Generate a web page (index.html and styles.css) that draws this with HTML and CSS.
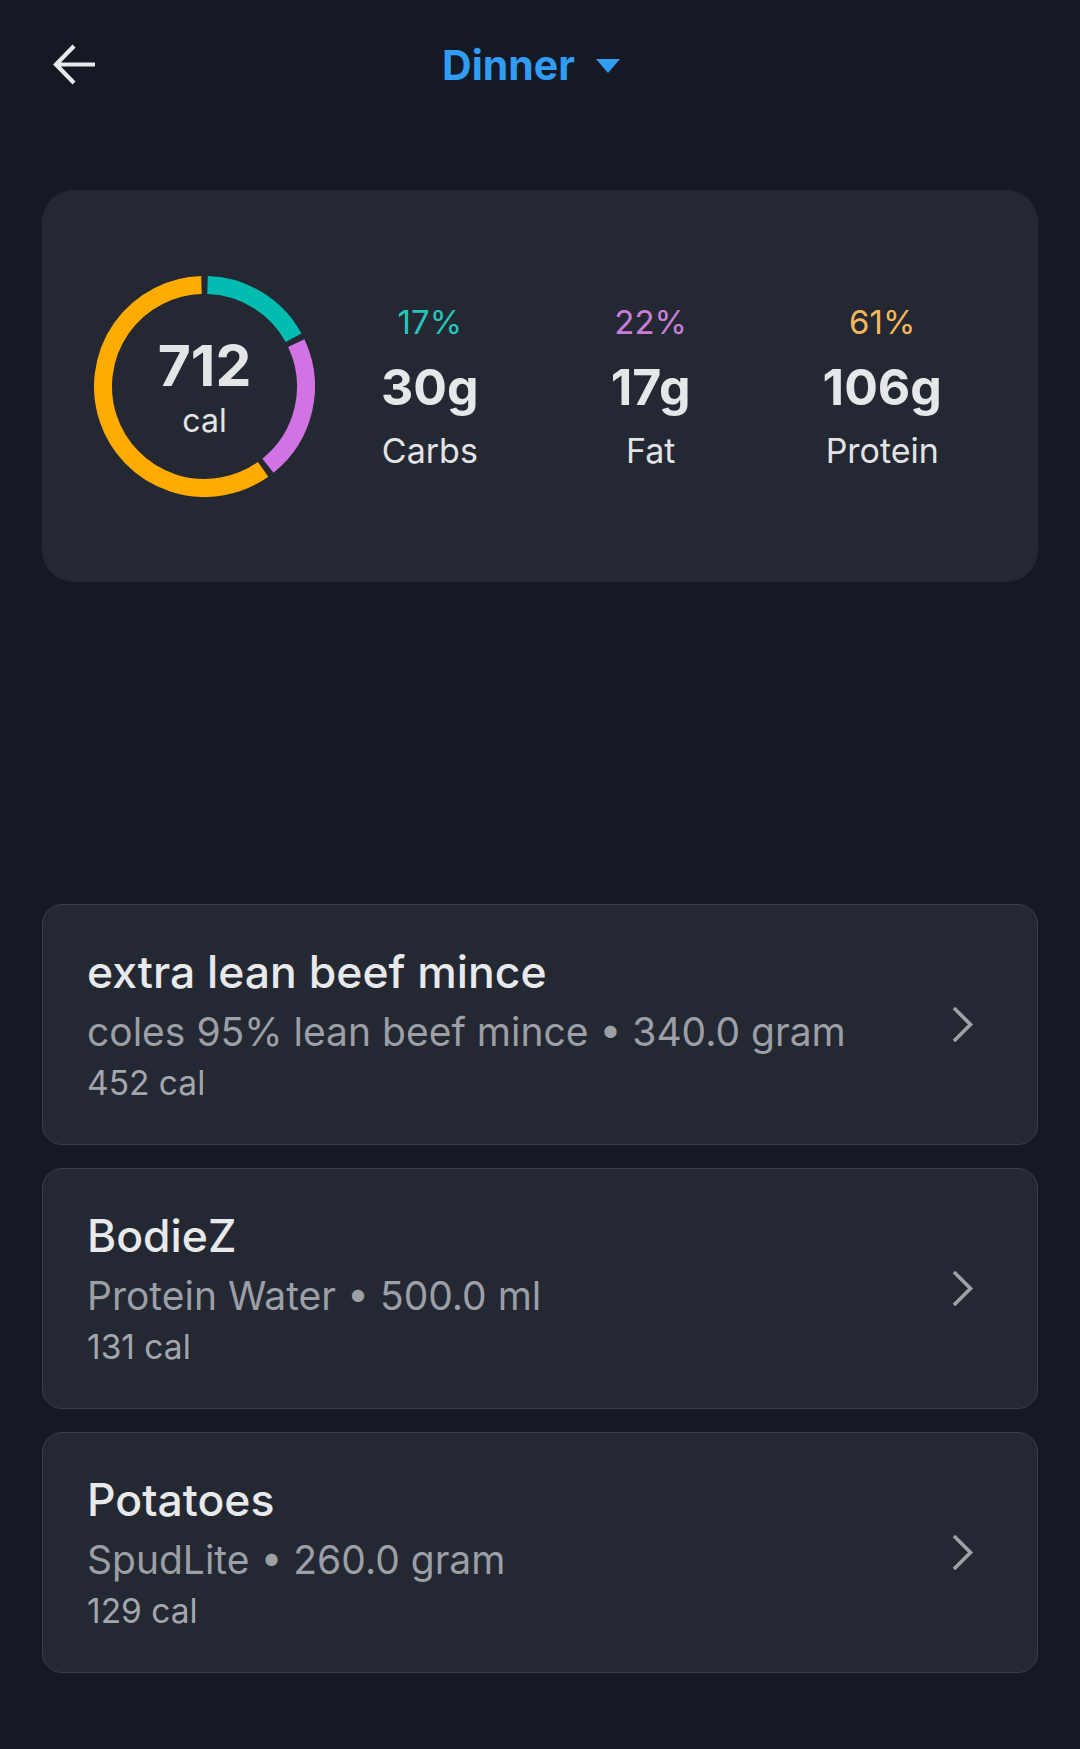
FILE: index.html
```html
<!DOCTYPE html>
<html lang="en">
<head>
    <meta charset="UTF-8">
    <meta name="viewport" content="width=device-width, initial-scale=1.0">
    <title>Dinner</title>
    <link rel="stylesheet" href="styles.css">
</head>
<body>
    <header class="topbar">
        <div class="back">
            <svg width="60" height="60" viewBox="0 0 60 60">
                <path d="M55 29.5H16.5M34 11L16 29.5L34 48" fill="none" stroke="#e8e9eb" stroke-width="4.2"/>
            </svg>
        </div>
        <div class="meal-select">
            <span class="meal-name">Dinner</span>
            <svg width="60" height="60" viewBox="0 0 60 60">
                <path d="M18 24H42L30 38Z" fill="#319cf4"/>
            </svg>
        </div>
        <div></div>
    </header>

    <main class="content">
        <section class="summary">
            <div class="ring">
                <svg width="221" height="221" viewBox="0 0 221 221">
                    <!-- carbs, fat, protein -->
                    <path d="M113.51 9.04A101.5 101.5 0 0 1 199.53 61.76" fill="none" stroke="#00bcb1" stroke-width="18"/>
                    <path d="M202.26 67.12A101.5 101.5 0 0 1 173.96 189.71" fill="none" stroke="#d273e3" stroke-width="18"/>
                    <path d="M169.14 193.34A101.5 101.5 0 1 1 107.49 9.04" fill="none" stroke="#ffab00" stroke-width="18"/>
                </svg>
                <div class="ring-text">
                    <div class="kcal">712</div>
                    <div class="kcal-unit">cal</div>
                </div>
            </div>
            <div class="macros">
                <div class="macro">
                    <div class="pct carbs">17%</div>
                    <div class="grams">30g</div>
                    <div class="label">Carbs</div>
                </div>
                <div class="macro">
                    <div class="pct fat">22%</div>
                    <div class="grams">17g</div>
                    <div class="label">Fat</div>
                </div>
                <div class="macro">
                    <div class="pct protein">61%</div>
                    <div class="grams">106g</div>
                    <div class="label">Protein</div>
                </div>
            </div>
        </section>

        <ul class="foods">
            <li class="food">
                <div class="food-info">
                    <div class="food-name">extra lean beef mince</div>
                    <div class="food-desc">coles 95% lean beef mince • 340.0 gram</div>
                    <div class="food-cal">452 cal</div>
                </div>
                <svg class="chevron" width="24" height="40" viewBox="0 0 24 40">
                    <path d="M4 3L20.5 19.5L4 36" fill="none" stroke="#9fa2a9" stroke-width="3.6"/>
                </svg>
            </li>
            <li class="food">
                <div class="food-info">
                    <div class="food-name">BodieZ</div>
                    <div class="food-desc">Protein Water • 500.0 ml</div>
                    <div class="food-cal">131 cal</div>
                </div>
                <svg class="chevron" width="24" height="40" viewBox="0 0 24 40">
                    <path d="M4 3L20.5 19.5L4 36" fill="none" stroke="#9fa2a9" stroke-width="3.6"/>
                </svg>
            </li>
            <li class="food">
                <div class="food-info">
                    <div class="food-name">Potatoes</div>
                    <div class="food-desc">SpudLite • 260.0 gram</div>
                    <div class="food-cal">129 cal</div>
                </div>
                <svg class="chevron" width="24" height="40" viewBox="0 0 24 40">
                    <path d="M4 3L20.5 19.5L4 36" fill="none" stroke="#9fa2a9" stroke-width="3.6"/>
                </svg>
            </li>
        </ul>
    </main>
</body>
</html>
```

FILE: styles.css
```css
body {
    margin: 0;
    background-color: #151923;
    font-family: Inter, "Noto Sans", sans-serif;
    color: #e6e7ea;
    min-height: 100vh;
}

.topbar {
    height: 130px;
    display: grid;
    grid-template-columns: 1fr auto 1fr;
    align-items: center;
}

.back {
    padding-left: 40px;
    display: flex;
    align-items: center;
}

.back svg {
    display: block;
}

.meal-select {
    display: flex;
    align-items: center;
    gap: 3px;
}

.meal-name {
    font-size: 41px;
    font-weight: 700;
    color: #319cf4;
}

.content {
    padding: 60px 42px 0;
}

.summary {
    display: flex;
    align-items: center;
    height: 392px;
    box-sizing: border-box;
    padding: 0 30px 0 52px;
    background-color: #242833;
    border-radius: 32px;
}

.ring {
    position: relative;
    width: 221px;
    height: 221px;
    flex-shrink: 0;
}

.ring svg {
    display: block;
}

.ring-text {
    position: absolute;
    inset: 0;
    display: flex;
    flex-direction: column;
    align-items: center;
    justify-content: center;
    padding-top: 4px;
}

.kcal {
    font-size: 57px;
    line-height: 60px;
    font-weight: 700;
    color: #e4e5e7;
}

.kcal-unit {
    margin-top: 5px;
    font-size: 32px;
    line-height: 40px;
    color: #e4e5e7;
}

.macros {
    flex: 1;
    display: flex;
    justify-content: space-around;
}

.macro {
    display: flex;
    flex-direction: column;
    align-items: center;
}

.pct {
    font-size: 33px;
    line-height: 44px;
    margin-bottom: 10px;
}

.pct.carbs {
    color: #26c6bc;
}

.pct.fat {
    color: #c97fd9;
}

.pct.protein {
    color: #f6b75a;
}

.grams {
    font-size: 50px;
    line-height: 66px;
    font-weight: 700;
    color: #e6e7e9;
}

.label {
    margin-top: 9px;
    font-size: 34px;
    line-height: 44px;
    color: #e2e3e6;
}

.foods {
    list-style: none;
    margin: 322px 0 0;
    padding: 0;
    display: flex;
    flex-direction: column;
    gap: 23px;
}

.food {
    display: flex;
    align-items: center;
    padding: 41px 63px 41px 44px;
    background-color: #242833;
    border: 1px solid #3a3e4a;
    border-radius: 20px;
}

.food-info {
    flex: 1;
}

.food-name {
    font-size: 44.5px;
    line-height: 52px;
    font-weight: 500;
    color: #e8e9eb;
}

.food-desc {
    margin-top: 8px;
    font-size: 39px;
    line-height: 52px;
    color: #9c9fa6;
}

.food-cal {
    margin-top: 5px;
    font-size: 33.5px;
    line-height: 40px;
    color: #a3a6ac;
}

.chevron {
    display: block;
    flex-shrink: 0;
}
```
